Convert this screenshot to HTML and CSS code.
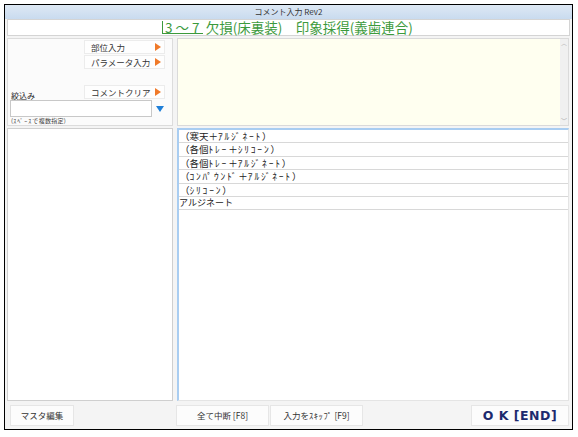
FILE: index.html
```html
<!DOCTYPE html>
<html lang="ja">
<head>
<meta charset="utf-8">
<link rel="stylesheet" href="styles.css">
</head>
<body>
<div class="window">
  <div class="titlebar">コメント入力 Rev2</div>
  <div class="header"><span class="tooth">3 ～ 7</span> 欠損(床裏装)　印象採得(義歯連合)</div>
  <div class="main">
    <div class="topleft">
      <div class="btnrow"><div class="btn">部位入力<span class="arrow"></span></div></div>
      <div class="btnrow"><div class="btn">パラメータ入力<span class="arrow"></span></div></div>
      <div class="clearrow">
        <span class="label">絞込み</span>
        <div class="btn">コメントクリア<span class="arrow"></span></div>
      </div>
      <div class="inputrow">
        <div class="input"></div>
        <span class="down"></span>
      </div>
      <div class="hint">(<span class="hk">ｽﾍﾟｰｽ</span>で複数指定)</div>
    </div>
    <div class="memo">
      <div class="scroll"><span class="up">︿</span><span class="dn">﹀</span></div>
    </div>
    <div class="bottomleft"></div>
    <div class="list">
      <div class="row">（寒天＋<span class="hk">ｱﾙｼﾞﾈｰﾄ</span>）</div>
      <div class="row">（各個<span class="hk">ﾄﾚｰ</span>＋<span class="hk">ｼﾘｺｰﾝ</span>）</div>
      <div class="row">（各個<span class="hk">ﾄﾚｰ</span>＋<span class="hk">ｱﾙｼﾞﾈｰﾄ</span>）</div>
      <div class="row">（<span class="hk">ｺﾝﾊﾟｳﾝﾄﾞ</span>＋<span class="hk">ｱﾙｼﾞﾈｰﾄ</span>）</div>
      <div class="row">（<span class="hk">ｼﾘｺｰﾝ</span>）</div>
      <div class="row plain">アルジネート</div>
    </div>
  </div>
  <div class="footer">
    <div class="fbtn master">マスタ編集</div>
    <div class="fbtn stop">全て中断 [F8]</div>
    <div class="fbtn skip">入力を<span class="hks">ｽｷｯﾌﾟ</span> [F9]</div>
    <div class="fbtn ok">O K [END]</div>
  </div>
</div>
</body>
</html>
```

FILE: styles.css
```css
html, body {
  margin: 0;
  padding: 0;
  background: #ffffff;
}
body {
  font-family: "Noto Sans CJK JP", "Noto Sans", sans-serif;
  color: #222;
}
.window {
  box-sizing: border-box;
  margin: 4px;
  width: 569px;
  height: 426px;
  border: 1px solid #000;
  background: #f4f4f4;
  display: flex;
  flex-direction: column;
}
.titlebar {
  height: 14px;
  line-height: 13px;
  background: linear-gradient(#dde8f4, #c9dbef);
  text-align: center;
  font-size: 8px;
  color: #333;
}
.header {
  box-sizing: border-box;
  height: 17px;
  margin: 0 2px 0 2px;
  border: 1px solid #d4d4d4;
  background: #fff;
  text-align: center;
  color: #3c9a3c;
  font-size: 13.5px;
  line-height: 14px;
  padding-right: 2px;
}
.tooth {
  display: inline-block;
  border-left: 1px solid #3c9a3c;
  border-bottom: 1px solid #3c9a3c;
  line-height: 12px;
  padding: 0 3px 0 2px;
}
.main {
  flex: 1;
  display: grid;
  grid-template-columns: 166px 392px;
  grid-template-rows: 88px 1fr;
  column-gap: 4px;
  row-gap: 2px;
  padding: 2px 0 1px 2px;
}
.topleft {
  box-sizing: border-box;
  border: 1px solid #dcdcdc;
  background: #fbfbfb;
  display: flex;
  flex-direction: column;
  padding: 1px 7px 0 2px;
}
.btnrow {
  display: flex;
  justify-content: flex-end;
  margin-bottom: 1px;
}
.btn {
  box-sizing: border-box;
  position: relative;
  width: 81px;
  height: 14px;
  border: 1px solid #ececec;
  background: #fefefe;
  font-size: 8.5px;
  line-height: 12px;
  padding-left: 6px;
  color: #333;
}
.arrow {
  position: absolute;
  right: 3px;
  top: 2px;
  width: 0;
  height: 0;
  border-top: 4px solid transparent;
  border-bottom: 4px solid transparent;
  border-left: 6px solid #f07a2a;
}
.clearrow {
  display: flex;
  justify-content: space-between;
  align-items: flex-end;
  margin-top: 15px;
}
.label {
  font-size: 8px;
  line-height: 9px;
  padding-left: 1px;
  margin-bottom: -1px;
}
.inputrow {
  display: flex;
  align-items: center;
  margin-top: 1px;
}
.input {
  box-sizing: border-box;
  width: 142px;
  height: 17px;
  border: 1px solid #c8c8c8;
  background: #fff;
}
.down {
  margin-left: 4px;
  width: 0;
  height: 0;
  border-left: 4px solid transparent;
  border-right: 4px solid transparent;
  border-top: 6px solid #1f7fd8;
}
.hint {
  font-size: 6px;
  line-height: 7px;
  color: #444;
  padding-left: 1px;
  letter-spacing: 0.3px;
}
.hint .hk {
  letter-spacing: 1px;
}
.memo {
  box-sizing: border-box;
  border: 1px solid #dadada;
  background: #fffff0;
  display: flex;
  justify-content: flex-end;
}
.scroll {
  width: 8px;
  background: #f0f0f0;
  display: flex;
  flex-direction: column;
  justify-content: space-between;
  align-items: center;
  font-size: 6px;
  color: #aaa;
  line-height: 8px;
}
.bottomleft {
  box-sizing: border-box;
  border: 1px solid #cfcfcf;
  background: #fff;
}
.list {
  box-sizing: border-box;
  border-top: 2px solid #a9cdf1;
  border-left: 2px solid #a9cdf1;
  border-right: 1px solid #e4e4e4;
  border-bottom: 1px solid #e4e4e4;
  background: #fff;
}
.row {
  height: 12.4px;
  border-bottom: 1px solid #d8d8d8;
  font-size: 9.5px;
  line-height: 12px;
  color: #222;
  white-space: nowrap;
  padding-left: 1px;
}
.row .hk {
  letter-spacing: 1.8px;
}
.row.plain {
  font-size: 9px;
  padding-left: 0;
}
.footer {
  height: 27px;
  display: flex;
  align-items: center;
  padding: 0 3px 0 5px;
}
.fbtn {
  box-sizing: border-box;
  height: 21px;
  border: 1px solid #e6e6e6;
  background: #fcfcfc;
  font-size: 8.5px;
  line-height: 19px;
  text-align: center;
  color: #333;
}
.hks {
  letter-spacing: 0.6px;
}
.master {
  width: 64px;
}
.stop {
  width: 93px;
  margin-left: 102px;
}
.skip {
  width: 93px;
  margin-left: 1px;
}
.ok {
  width: 98px;
  margin-left: auto;
  font-family: "DejaVu Sans", "Noto Sans", sans-serif;
  font-weight: bold;
  font-size: 12.5px;
  color: #1c2a6e;
  letter-spacing: 0.5px;
}
```
